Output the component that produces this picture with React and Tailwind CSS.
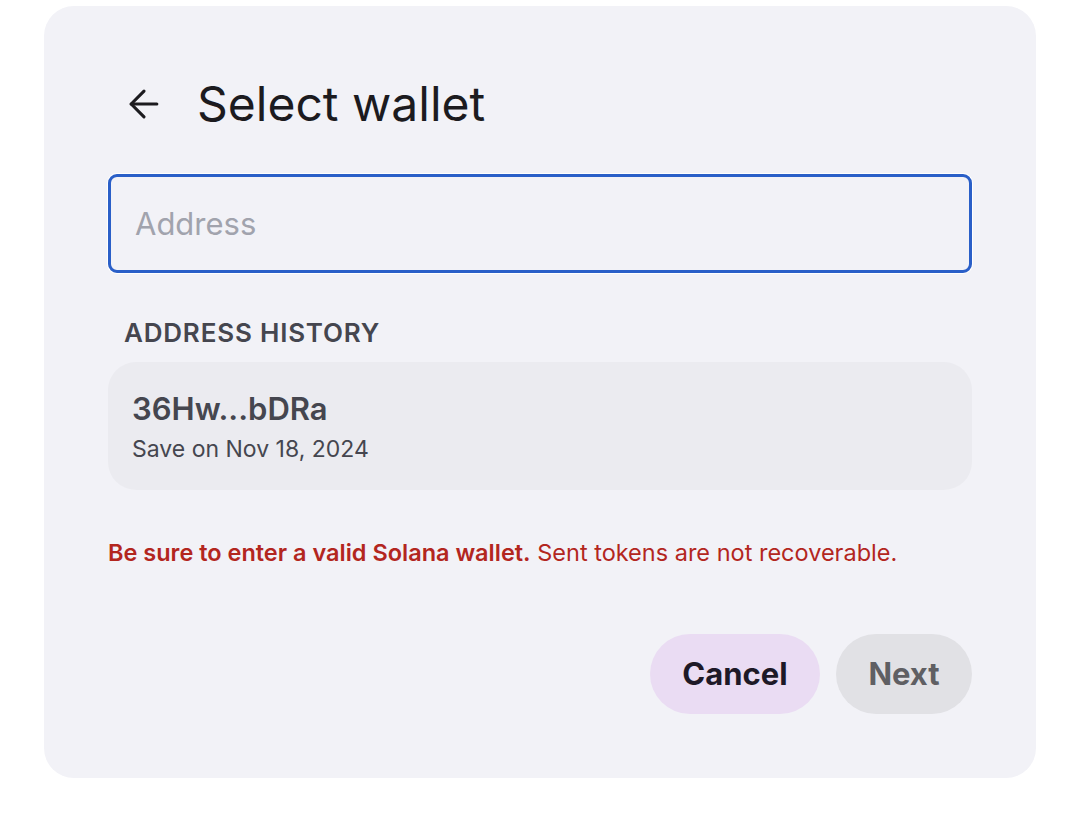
import { ArrowLeft } from "lucide-react";

export default function App() {
  return (
    <div className="min-h-screen bg-white pt-[6px] pl-[44px] font-['Inter',sans-serif]">
      <div className="flex h-[772px] w-[992px] flex-col rounded-[30px] bg-[#f2f2f7] px-16 pt-[68px]">
        {/* Header */}
        <div className="flex h-[60px] items-center gap-[31px] pl-[14px]">
          <ArrowLeft className="h-[44px] w-[44px] text-[#1c1b1f]" strokeWidth={1.7} />
          <h1 className="text-[48px] leading-[60px] text-[#1c1b1f]">Select wallet</h1>
        </div>

        {/* Input */}
        <div className="mt-[40px] rounded-[9px] ring-1 ring-white">
          <input
            placeholder="Address"
            className="h-[99px] w-full rounded-[9px] border-[3px] border-[#2a5fc8] bg-transparent px-[24px] text-[31px] text-[#1c1b1f] outline-none placeholder:text-[#a1a3ad]"
          />
        </div>

        {/* History */}
        <div className="mt-[45px] pl-[16px] text-[26px] font-semibold leading-[30px] tracking-[0.8px] text-[#45464f]">
          ADDRESS HISTORY
        </div>
        <div className="mt-[14px] flex h-[128px] flex-col rounded-[28px] bg-[#ebebf0] px-[24px] pt-[29px]">
          <div className="text-[31px] font-semibold leading-[36px] text-[#45464f]">36Hw...bDRa</div>
          <div className="mt-[8px] text-[23px] leading-[28px] text-[#45464f]">Save on Nov 18, 2024</div>
        </div>

        {/* Warning */}
        <p className="mt-[48px] text-[23.5px] leading-[30px] text-[#b3261e]">
          <span className="font-semibold">Be sure to enter a valid Solana wallet.</span> Sent tokens are not recoverable.
        </p>

        {/* Actions */}
        <div className="mt-[66px] flex justify-end gap-[16px]">
          <button className="h-[80px] w-[170px] rounded-full bg-[#eadcf3] text-[31px] font-bold text-[#1e1927]">
            Cancel
          </button>
          <button className="h-[80px] w-[136px] rounded-full bg-[#e1e1e5] text-[31px] font-bold text-[#5f5f63]">
            Next
          </button>
        </div>
      </div>
    </div>
  );
}
